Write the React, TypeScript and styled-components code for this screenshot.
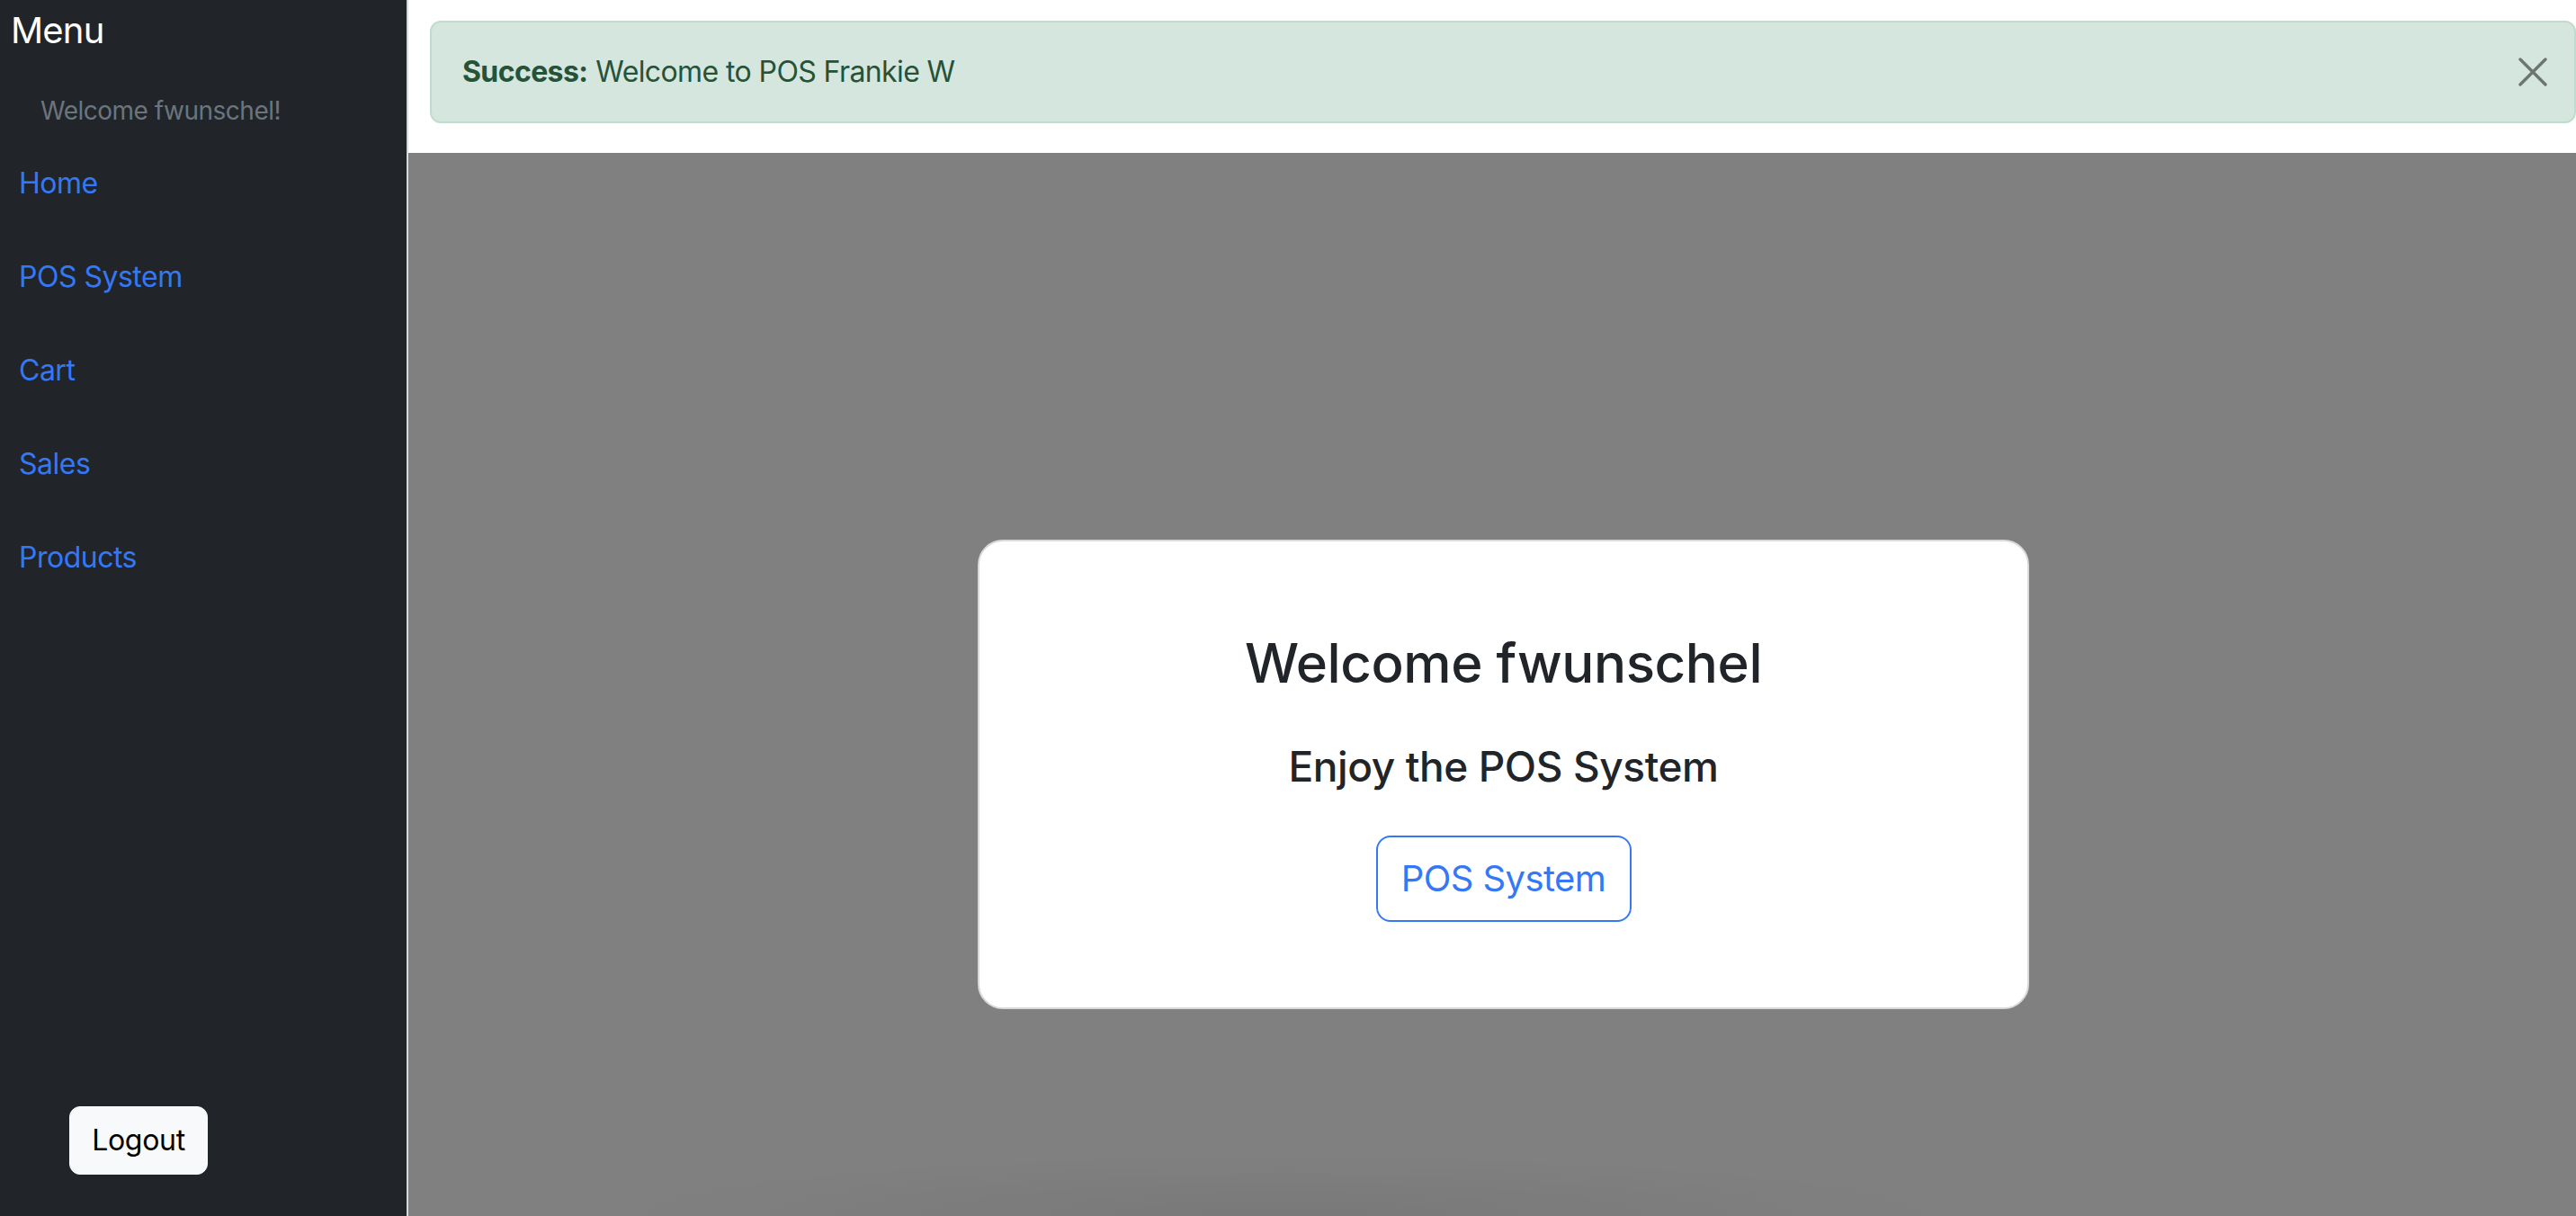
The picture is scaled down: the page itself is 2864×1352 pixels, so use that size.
import React from 'react';
import styled, { createGlobalStyle } from 'styled-components';

const GlobalStyle = createGlobalStyle`
  html, body {
    margin: 0;
    padding: 0;
    height: 100%;
  }
  body {
    font-family: Inter, "Noto Sans", "Liberation Sans", sans-serif;
    background: #ffffff;
  }
  #root {
    height: 100%;
  }
`;

const Layout = styled.div`
  display: flex;
  height: 100vh;
  overflow: hidden;
`;

const Sidebar = styled.aside`
  flex: 0 0 452px;
  display: flex;
  flex-direction: column;
  background-color: #212529;
  border-right: 2px solid #d6d9dc;
`;

const MenuTitle = styled.h5`
  margin: 0;
  padding: 10px 12px 0;
  font-size: 40px;
  line-height: 48px;
  font-weight: 400;
  letter-spacing: -0.8px;
  color: #ffffff;
`;

const Greeting = styled.div`
  margin-top: 44px;
  padding-left: 45px;
  font-size: 28px;
  line-height: 42px;
  letter-spacing: -0.5px;
  color: #6c757d;
`;

const Nav = styled.nav`
  display: flex;
  flex-direction: column;
  margin-top: 8px;
`;

const NavLink = styled.a`
  display: block;
  padding: 28px 21px;
  font-size: 32px;
  line-height: 48px;
  letter-spacing: -0.5px;
  color: #3478f6;
  text-decoration: none;
  cursor: pointer;
`;

const SidebarFooter = styled.div`
  margin-top: auto;
  padding: 0 0 46px 77px;
`;

const LogoutButton = styled.button`
  display: inline-block;
  width: 154px;
  height: 76px;
  padding: 12px 20px;
  font-family: inherit;
  font-size: 32px;
  line-height: 48px;
  letter-spacing: -0.3px;
  color: #000000;
  background-color: #f8f9fa;
  border: 1px solid #f8f9fa;
  border-radius: 12px;
  cursor: pointer;
`;

const Main = styled.main`
  flex: 1;
  display: flex;
  flex-direction: column;
  min-width: 0;
`;

const TopBar = styled.div`
  flex: 0 0 170px;
  box-sizing: border-box;
  padding: 23px 0 0 24px;
  background: #ffffff;
`;

const Alert = styled.div`
  display: flex;
  align-items: center;
  justify-content: space-between;
  height: 114px;
  box-sizing: border-box;
  padding: 0 28px 0 34px;
  background-color: #d4e6dd;
  border: 2px solid #c1dccf;
  border-radius: 12px;
  color: #265237;
  font-size: 32px;
  line-height: 48px;
  letter-spacing: -0.6px;

  strong {
    font-weight: 700;
    margin-right: 9px;
  }
`;

const CloseButton = styled.button`
  display: flex;
  align-items: center;
  justify-content: center;
  width: 36px;
  height: 36px;
  padding: 0;
  background: transparent;
  border: 0;
  cursor: pointer;
`;

const Backdrop = styled.section`
  flex: 1;
  display: flex;
  justify-content: center;
  align-items: flex-start;
  padding: 430px 0 0 25px;
  background-color: #808080;
  background-image: radial-gradient(
    ellipse 760px 70px at 972px 100%,
    rgba(0, 0, 0, 0.06),
    rgba(0, 0, 0, 0) 100%
  );
`;

const WelcomeCard = styled.div`
  width: 1169px;
  height: 522px;
  box-sizing: border-box;
  display: flex;
  flex-direction: column;
  align-items: center;
  padding-top: 99px;
  background: #ffffff;
  border: 2px solid #d9d9d9;
  border-radius: 28px;
  color: #212529;
`;

const Heading = styled.h2<{ $size: number; $gap: number }>`
  margin: ${(p) => p.$gap}px 0 0;
  font-size: ${(p) => p.$size}px;
  line-height: 1.2;
  font-weight: 500;
  letter-spacing: -0.4px;
`;

const OutlineButton = styled.button`
  margin-top: 49px;
  width: 284px;
  height: 96px;
  padding: 16px 0;
  font-family: inherit;
  font-size: 40px;
  line-height: 60px;
  letter-spacing: -0.6px;
  color: #3478f6;
  background: #ffffff;
  border: 2px solid #3478f6;
  border-radius: 16px;
  cursor: pointer;
`;

const links = ['Home', 'POS System', 'Cart', 'Sales', 'Products'];

export default function App() {
  return (
    <>
      <GlobalStyle />
      <Layout>
        <Sidebar>
          <MenuTitle>Menu</MenuTitle>
          <Greeting>Welcome fwunschel!</Greeting>
          <Nav>
            {links.map((label) => (
              <NavLink key={label}>{label}</NavLink>
            ))}
          </Nav>
          <SidebarFooter>
            <LogoutButton>Logout</LogoutButton>
          </SidebarFooter>
        </Sidebar>

        <Main>
          <TopBar>
            <Alert>
              <span>
                <strong>Success:</strong>Welcome to POS Frankie W
              </span>
              <CloseButton aria-label="Close">
                <svg width="32" height="32" viewBox="0 0 32 32">
                  <path
                    d="M2 2 L30 30 M30 2 L2 30"
                    stroke="#6b7671"
                    strokeWidth="3.4"
                    strokeLinecap="round"
                  />
                </svg>
              </CloseButton>
            </Alert>
          </TopBar>

          <Backdrop>
            <WelcomeCard>
              <Heading $size={60} $gap={0}>Welcome fwunschel</Heading>
              <Heading $size={46} $gap={52}>Enjoy the POS System</Heading>
              <OutlineButton>POS System</OutlineButton>
            </WelcomeCard>
          </Backdrop>
        </Main>
      </Layout>
    </>
  );
}
